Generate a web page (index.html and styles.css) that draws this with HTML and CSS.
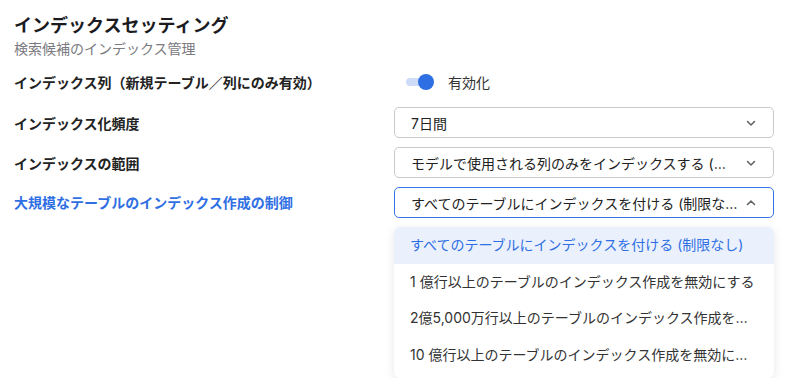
FILE: index.html
```html
<!DOCTYPE html>
<html lang="ja">
<head>
<meta charset="UTF-8">
<meta name="viewport" content="width=device-width, initial-scale=1.0">
<title>インデックスセッティング</title>
<link rel="stylesheet" href="styles.css">
</head>
<body>

<div id="indexSettings">
  <h2>インデックスセッティング</h2>
  <p class="subtitle">検索候補のインデックス管理</p>

  <div class="settingsRows">
    <div class="row toggleRow">
      <label class="rowLabel">インデックス列（新規テーブル／列にのみ有効）</label>
      <div class="toggleWrap">
        <span class="toggle"><span class="knob"></span></span>
        <span class="toggleText">有効化</span>
      </div>
    </div>

    <div class="row">
      <label class="rowLabel">インデックス化頻度</label>
      <div class="select">
        <span class="selectText">7日間</span>
        <svg class="chevron" viewBox="0 0 12 12"><path d="M2.5 4.5 6 8l3.5-3.5"/></svg>
      </div>
    </div>

    <div class="row">
      <label class="rowLabel">インデックスの範囲</label>
      <div class="select">
        <span class="selectText">モデルで使用される列のみをインデックスする (デフォルト)</span>
        <svg class="chevron" viewBox="0 0 12 12"><path d="M2.5 4.5 6 8l3.5-3.5"/></svg>
      </div>
    </div>

    <div class="row topAligned">
      <label class="rowLabel active">大規模なテーブルのインデックス作成の制御</label>
      <div class="selectWrap">
        <div class="select open">
          <span class="selectText">すべてのテーブルにインデックスを付ける (制限なし)</span>
          <svg class="chevron" viewBox="0 0 12 12"><path d="M2.5 7.5 6 4l3.5 3.5"/></svg>
        </div>
        <ul class="menu">
          <li class="selected">すべてのテーブルにインデックスを付ける (制限なし)</li>
          <li>1 億行以上のテーブルのインデックス作成を無効にする</li>
          <li>2億5,000万行以上のテーブルのインデックス作成を無効にする</li>
          <li>10 億行以上のテーブルのインデックス作成を無効にする</li>
        </ul>
      </div>
    </div>
  </div>
</div>

</body>
</html>
```

FILE: styles.css
```css
body {
  font-family: Inter, "Noto Sans CJK JP", sans-serif;
  background-color: #fff;
  color: #222;
  margin: 0;
  padding: 0;
}

#indexSettings {
  padding: 13px 20px 0 14px;
  width: 760px;
}

h2 {
  margin: 0;
  font-size: 18px;
  font-weight: 700;
  line-height: 26px;
  color: #1b1b1f;
}

.subtitle {
  margin: 0;
  font-size: 14px;
  line-height: 20px;
  color: #7a7a80;
}

.settingsRows {
  margin-top: 6px;
  display: flex;
  flex-direction: column;
  gap: 9px;
}

.row {
  display: grid;
  grid-template-columns: 380px 380px;
  align-items: center;
  min-height: 31px;
}

.row.toggleRow {
  min-height: 33px;
}

.row.topAligned {
  align-items: start;
}

.row.topAligned .rowLabel {
  line-height: 31px;
}

.rowLabel {
  font-size: 14px;
  font-weight: 700;
  color: #222;
}

.rowLabel.active {
  color: #2f6fe4;
}

.toggleWrap {
  display: flex;
  align-items: center;
  padding-left: 12px;
}

.toggle {
  position: relative;
  width: 26px;
  height: 8px;
  border-radius: 4px;
  background-color: #cfdcf7;
}

.toggle .knob {
  position: absolute;
  right: -2px;
  top: -4px;
  width: 16px;
  height: 16px;
  border-radius: 50%;
  background-color: #2f6fe4;
}

.toggleText {
  margin-left: 16px;
  font-size: 14px;
  color: #333;
}

.selectWrap {
  display: flex;
  flex-direction: column;
  gap: 9px;
}

.select {
  display: flex;
  align-items: center;
  height: 31px;
  padding: 0 16px;
  border: 1px solid #c9c9ce;
  border-radius: 5px;
  box-sizing: border-box;
  font-size: 14px;
  color: #222;
}

.select.open {
  border-color: #3574e8;
}

.selectText {
  flex: 1;
  white-space: nowrap;
  overflow: hidden;
  text-overflow: ellipsis;
  padding-right: 6px;
}

.chevron {
  width: 12px;
  height: 12px;
  fill: none;
  stroke: #666;
  stroke-width: 1.6;
  stroke-linecap: round;
  stroke-linejoin: round;
}

.menu {
  margin: 0;
  padding: 0 0 5px 0;
  list-style: none;
  background-color: #fff;
  border-radius: 6px;
  box-shadow: 0 2px 10px rgba(0, 0, 0, 0.1);
  overflow: hidden;
}

.menu li {
  height: 36.5px;
  line-height: 36.5px;
  padding: 0 14px 0 16px;
  font-size: 14px;
  color: #333;
  white-space: nowrap;
  overflow: hidden;
  text-overflow: ellipsis;
}

.menu li.selected {
  background-color: #eaf1fd;
  color: #2f6fe4;
}
```
